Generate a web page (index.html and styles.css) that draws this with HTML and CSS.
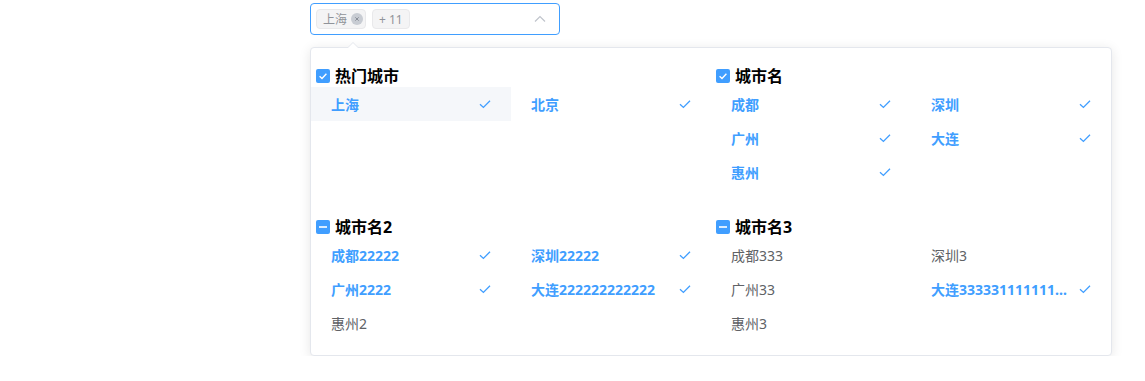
FILE: index.html
```html
<!DOCTYPE html>
<html lang="zh-CN">
<head>
    <meta charset="UTF-8">
    <title>城市选择</title>
    <link rel="stylesheet" href="styles.css">
</head>
<body>
<div class="page">
    <div class="select">
        <div class="tags">
            <span class="tag">上海<span class="tag-close"><svg width="12" height="12" viewBox="0 0 12 12"><path d="M4.3 4.3L7.7 7.7M7.7 4.3L4.3 7.7" stroke="#8a8f99" stroke-width="1"/></svg></span></span>
            <span class="tag tag-count">+ 11</span>
        </div>
        <svg class="select-arrow" width="12" height="8" viewBox="0 0 12 8"><polyline points="1,6.5 6,1.5 11,6.5" fill="none" stroke="#c0c4cc" stroke-width="1.2"/></svg>
    </div>

    <div class="dropdown">
        <div class="groups">
            <!-- 热门城市 -->
            <div class="group">
                <div class="group-title">
                    <span class="checkbox"><svg width="14" height="14" viewBox="0 0 14 14"><polyline points="3.6,7.2 6,9.4 10.4,4.8" fill="none" stroke="#fff" stroke-width="1.4"/></svg></span>
                    热门城市
                </div>
                <ul class="options">
                    <li class="option selected hover"><span class="label">上海</span><svg class="tick" width="12" height="10" viewBox="0 0 12 10"><polyline points="1,5.2 4.4,8.4 11,1.8" fill="none" stroke="#409eff" stroke-width="1.3"/></svg></li>
                    <li class="option selected"><span class="label">北京</span><svg class="tick" width="12" height="10" viewBox="0 0 12 10"><polyline points="1,5.2 4.4,8.4 11,1.8" fill="none" stroke="#409eff" stroke-width="1.3"/></svg></li>
                </ul>
            </div>
            <!-- 城市名 -->
            <div class="group">
                <div class="group-title">
                    <span class="checkbox"><svg width="14" height="14" viewBox="0 0 14 14"><polyline points="3.6,7.2 6,9.4 10.4,4.8" fill="none" stroke="#fff" stroke-width="1.4"/></svg></span>
                    城市名
                </div>
                <ul class="options">
                    <li class="option selected"><span class="label">成都</span><svg class="tick" width="12" height="10" viewBox="0 0 12 10"><polyline points="1,5.2 4.4,8.4 11,1.8" fill="none" stroke="#409eff" stroke-width="1.3"/></svg></li>
                    <li class="option selected"><span class="label">深圳</span><svg class="tick" width="12" height="10" viewBox="0 0 12 10"><polyline points="1,5.2 4.4,8.4 11,1.8" fill="none" stroke="#409eff" stroke-width="1.3"/></svg></li>
                    <li class="option selected"><span class="label">广州</span><svg class="tick" width="12" height="10" viewBox="0 0 12 10"><polyline points="1,5.2 4.4,8.4 11,1.8" fill="none" stroke="#409eff" stroke-width="1.3"/></svg></li>
                    <li class="option selected"><span class="label">大连</span><svg class="tick" width="12" height="10" viewBox="0 0 12 10"><polyline points="1,5.2 4.4,8.4 11,1.8" fill="none" stroke="#409eff" stroke-width="1.3"/></svg></li>
                    <li class="option selected"><span class="label">惠州</span><svg class="tick" width="12" height="10" viewBox="0 0 12 10"><polyline points="1,5.2 4.4,8.4 11,1.8" fill="none" stroke="#409eff" stroke-width="1.3"/></svg></li>
                </ul>
            </div>
            <!-- 城市名2 -->
            <div class="group">
                <div class="group-title">
                    <span class="checkbox"><svg width="14" height="14" viewBox="0 0 14 14"><rect x="3" y="6.2" width="8" height="1.6" fill="#fff"/></svg></span>
                    城市名2
                </div>
                <ul class="options">
                    <li class="option selected"><span class="label">成都22222</span><svg class="tick" width="12" height="10" viewBox="0 0 12 10"><polyline points="1,5.2 4.4,8.4 11,1.8" fill="none" stroke="#409eff" stroke-width="1.3"/></svg></li>
                    <li class="option selected"><span class="label">深圳22222</span><svg class="tick" width="12" height="10" viewBox="0 0 12 10"><polyline points="1,5.2 4.4,8.4 11,1.8" fill="none" stroke="#409eff" stroke-width="1.3"/></svg></li>
                    <li class="option selected"><span class="label">广州2222</span><svg class="tick" width="12" height="10" viewBox="0 0 12 10"><polyline points="1,5.2 4.4,8.4 11,1.8" fill="none" stroke="#409eff" stroke-width="1.3"/></svg></li>
                    <li class="option selected"><span class="label">大连222222222222</span><svg class="tick" width="12" height="10" viewBox="0 0 12 10"><polyline points="1,5.2 4.4,8.4 11,1.8" fill="none" stroke="#409eff" stroke-width="1.3"/></svg></li>
                    <li class="option"><span class="label">惠州2</span></li>
                </ul>
            </div>
            <!-- 城市名3 -->
            <div class="group">
                <div class="group-title">
                    <span class="checkbox"><svg width="14" height="14" viewBox="0 0 14 14"><rect x="3" y="6.2" width="8" height="1.6" fill="#fff"/></svg></span>
                    城市名3
                </div>
                <ul class="options">
                    <li class="option"><span class="label">成都333</span></li>
                    <li class="option"><span class="label">深圳3</span></li>
                    <li class="option"><span class="label">广州33</span></li>
                    <li class="option selected"><span class="label">大连33333111111111111</span><svg class="tick" width="12" height="10" viewBox="0 0 12 10"><polyline points="1,5.2 4.4,8.4 11,1.8" fill="none" stroke="#409eff" stroke-width="1.3"/></svg></li>
                    <li class="option"><span class="label">惠州3</span></li>
                </ul>
            </div>
        </div>
    </div>
</div>
</body>
</html>
```

FILE: styles.css
```css
body, ul, li {
    margin: 0;
    padding: 0;
    list-style: none;
}

body {
    font-family: "Noto Sans", "Noto Sans CJK SC", sans-serif;
    background: #fff;
    color: #606266;
}

.page {
    padding: 3px 0 0 310px;
}

/* 输入框 */
.select {
    box-sizing: border-box;
    width: 250px;
    height: 32px;
    border: 1px solid #409eff;
    border-radius: 4px;
    display: flex;
    align-items: center;
    justify-content: space-between;
    padding: 0 13px 0 5px;
}

.tags {
    display: flex;
    align-items: center;
    gap: 6px;
}

.tag {
    box-sizing: border-box;
    height: 20px;
    display: flex;
    align-items: center;
    padding: 0 2px 0 6px;
    font-size: 12px;
    color: #909399;
    background-color: #f4f4f5;
    border: 1px solid #e9e9eb;
    border-radius: 4px;
}

.tag-count {
    padding: 0 6px;
}

.tag-close {
    display: flex;
    width: 12px;
    height: 12px;
    margin-left: 4px;
    border-radius: 50%;
    background-color: #c8ccd3;
}

.select-arrow {
    display: block;
}

/* 下拉 */
.dropdown {
    position: relative;
    box-sizing: border-box;
    width: 802px;
    margin-top: 12px;
    padding-top: 5px;
    background: #fff;
    border: 1px solid #e4e7ed;
    border-radius: 4px;
    box-shadow: 0 2px 12px 0 rgba(0, 0, 0, 0.1);
}

.dropdown::before,
.dropdown::after {
    content: "";
    position: absolute;
    left: 36px;
    width: 0;
    height: 0;
    border: 6px solid transparent;
    border-top-width: 0;
}

.dropdown::before {
    top: -6px;
    border-bottom-color: #e4e7ed;
}

.dropdown::after {
    top: -5px;
    border-bottom-color: #fff;
}

.groups {
    display: grid;
    grid-template-columns: 400px 400px;
}

.group {
    padding-bottom: 15px;
}

.group-title {
    box-sizing: border-box;
    height: 34px;
    display: flex;
    align-items: flex-end;
    padding: 0 0 1px 5px;
    font-size: 16px;
    font-weight: 700;
    line-height: 20px;
    color: #000;
}

.checkbox {
    display: block;
    width: 14px;
    height: 14px;
    margin: 0 5px 3px 0;
    border-radius: 2px;
    background-color: #409eff;
}

.checkbox svg {
    display: block;
}

.options {
    display: grid;
    grid-template-columns: 200px 200px;
}

.option {
    box-sizing: border-box;
    height: 34px;
    display: flex;
    align-items: center;
    padding: 0 20px;
    font-size: 14px;
    color: #606266;
}

.option .label {
    flex: 1;
    min-width: 0;
    overflow: hidden;
    white-space: nowrap;
    text-overflow: ellipsis;
}

.option.selected {
    color: #409eff;
    font-weight: 700;
}

.option.hover {
    background-color: #f5f7fa;
}

.tick {
    flex: none;
    margin-left: 8px;
}
```
